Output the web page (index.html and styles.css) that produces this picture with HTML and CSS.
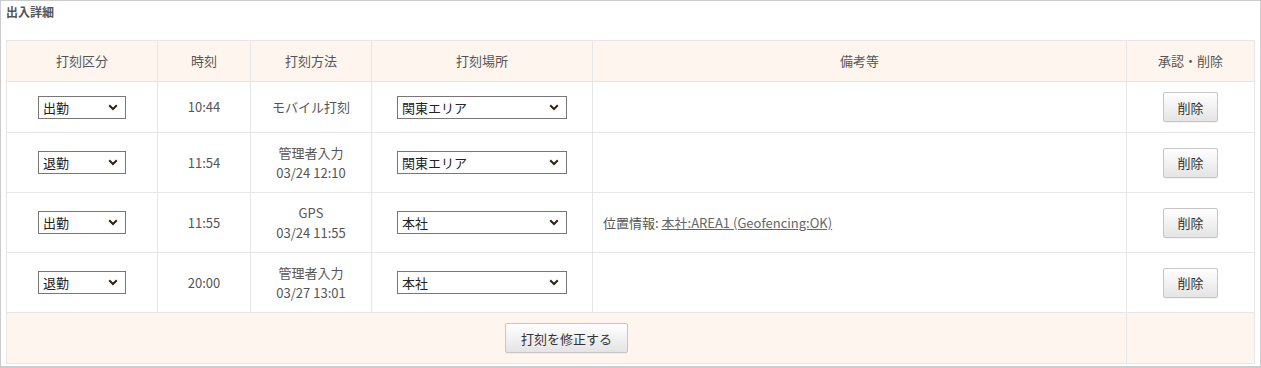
FILE: index.html
```html
<!DOCTYPE html>
<html lang="ja">
<head>
    <meta charset="UTF-8">
    <title>出入詳細</title>
    <link rel="stylesheet" href="styles.css">
</head>
<body>
    <div class="panel">
        <h3 class="panel-title">出入詳細</h3>

        <table class="detail-table">
            <colgroup>
                <col style="width:151px">
                <col style="width:93px">
                <col style="width:121px">
                <col style="width:221px">
                <col>
                <col style="width:128px">
            </colgroup>
            <thead>
                <tr>
                    <th>打刻区分</th>
                    <th>時刻</th>
                    <th>打刻方法</th>
                    <th>打刻場所</th>
                    <th>備考等</th>
                    <th>承認・削除</th>
                </tr>
            </thead>
            <tbody>
                <tr>
                    <td><select class="sel sel-kind"><option>出勤</option><option>退勤</option></select></td>
                    <td>10:44</td>
                    <td>モバイル打刻</td>
                    <td><select class="sel sel-place"><option>関東エリア</option><option>本社</option></select></td>
                    <td class="note"></td>
                    <td><button class="btn">削除</button></td>
                </tr>
                <tr>
                    <td><select class="sel sel-kind"><option>退勤</option><option>出勤</option></select></td>
                    <td>11:54</td>
                    <td>管理者入力<br>03/24 12:10</td>
                    <td><select class="sel sel-place"><option>関東エリア</option><option>本社</option></select></td>
                    <td class="note"></td>
                    <td><button class="btn">削除</button></td>
                </tr>
                <tr>
                    <td><select class="sel sel-kind"><option>出勤</option><option>退勤</option></select></td>
                    <td>11:55</td>
                    <td>GPS<br>03/24 11:55</td>
                    <td><select class="sel sel-place"><option>本社</option><option>関東エリア</option></select></td>
                    <td class="note">位置情報: <a href="#">本社:AREA1 (Geofencing:OK)</a></td>
                    <td><button class="btn">削除</button></td>
                </tr>
                <tr>
                    <td><select class="sel sel-kind"><option>退勤</option><option>出勤</option></select></td>
                    <td>20:00</td>
                    <td>管理者入力<br>03/27 13:01</td>
                    <td><select class="sel sel-place"><option>本社</option><option>関東エリア</option></select></td>
                    <td class="note"></td>
                    <td><button class="btn">削除</button></td>
                </tr>
            </tbody>
            <tfoot>
                <tr>
                    <td colspan="5"><button class="btn btn-fix">打刻を修正する</button></td>
                    <td></td>
                </tr>
            </tfoot>
        </table>
    </div>
</body>
</html>
```

FILE: styles.css
```css
body { margin: 0; font-family: "Noto Sans CJK JP", "Noto Sans", sans-serif; color: #555; font-size: 13px; }

.panel { width: 1261px; height: 368px; box-sizing: border-box; border: 1px solid #ccc; border-bottom-width: 2px; padding: 3px 5px 5px; }
.panel-title { margin: 0 0 20px; font-size: 12px; line-height: 16px; font-weight: bold; color: #555; }

.detail-table { width: 100%; border-collapse: collapse; table-layout: fixed; }
.detail-table th, .detail-table td { border: 1px solid #e6e6e6; padding: 10px 6px; line-height: 19.5px; text-align: center; vertical-align: middle; }
.detail-table th { background: #fef5ef; font-weight: normal; line-height: 20px; }
.detail-table td.note { text-align: left; padding-left: 10px; }
.detail-table tfoot td { background: #fef5ef; }

.note a { color: #666; text-decoration: underline; }

.sel { appearance: none; -webkit-appearance: none; height: 23px; box-sizing: border-box; border: 1px solid #777; border-radius: 0; padding: 0 20px 0 4px; font-family: inherit; font-size: 13px; color: #222; vertical-align: middle;
  background: #fff url("data:image/svg+xml,%3Csvg xmlns='http://www.w3.org/2000/svg' width='10' height='7' viewBox='0 0 10 7'%3E%3Cpath d='M1.2 1.3 5 5 8.8 1.3' fill='none' stroke='%23332211' stroke-width='2'/%3E%3C/svg%3E") no-repeat right 7px center; }
.sel-kind { width: 88px; }
.sel-place { width: 170px; }

.btn { height: 30px; padding: 0 13px; border: 1px solid #c6c6c6; border-radius: 2px; background: linear-gradient(#ffffff, #e4e4e4); font-family: inherit; font-size: 13px; color: #333; vertical-align: middle; box-shadow: 0 1px 0 rgba(0,0,0,0.04); }
.btn-fix { padding: 0 15px; }
```
